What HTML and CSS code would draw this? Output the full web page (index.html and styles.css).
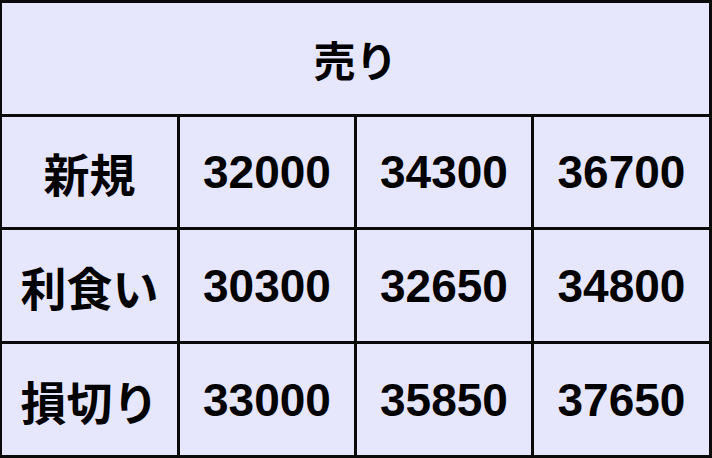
FILE: index.html
```html
<!DOCTYPE html>
<html lang="ja">
<head>
<meta charset="utf-8">
<link rel="stylesheet" href="styles.css">
</head>
<body>
<div class="table">
  <div class="cell head">売り</div>
  <div class="cell label">新規</div>
  <div class="cell num">32000</div>
  <div class="cell num">34300</div>
  <div class="cell num">36700</div>
  <div class="cell label">利食い</div>
  <div class="cell num">30300</div>
  <div class="cell num">32650</div>
  <div class="cell num">34800</div>
  <div class="cell label">損切り</div>
  <div class="cell num">33000</div>
  <div class="cell num">35850</div>
  <div class="cell num">37650</div>
</div>
</body>
</html>
```
FILE: styles.css
```css
html, body {
  margin: 0;
  padding: 0;
  background: #e6e6fc;
}
.table {
  width: 712px;
  height: 458px;
  box-sizing: border-box;
  display: grid;
  grid-template-columns: 175px 174px 174px 175px;
  grid-template-rows: 111px 110px 111px 111px;
  gap: 3px;
  padding: 3px 3px 3px 2px;
  background: #0a0a0a;
}
.cell {
  background: #e6e6fc;
  display: flex;
  align-items: center;
  justify-content: center;
  color: #000;
  font-weight: bold;
}
.head {
  grid-column: 1 / 5;
  font-family: "Noto Sans CJK JP", sans-serif;
  font-size: 42px;
  font-weight: 700;
}
.label {
  font-family: "Noto Sans CJK JP", sans-serif;
  font-size: 46px;
  font-weight: 700;
}
.num {
  font-family: "Liberation Sans", Arial, sans-serif;
  font-size: 46px;
}
```
